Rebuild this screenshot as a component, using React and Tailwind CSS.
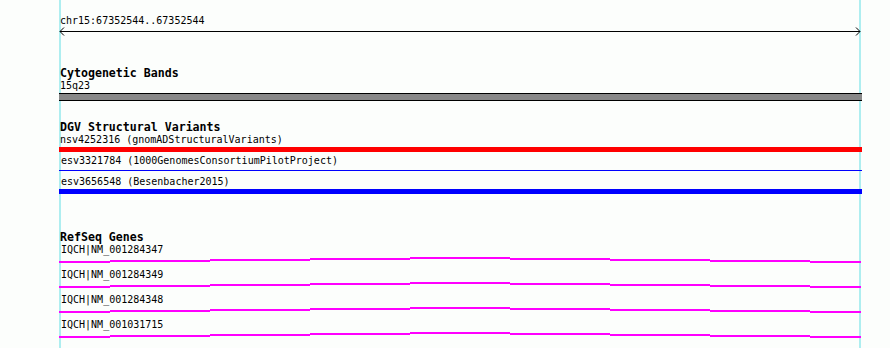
import React from 'react';

const genes = ['IQCH|NM_001284347', 'IQCH|NM_001284349', 'IQCH|NM_001284348', 'IQCH|NM_001031715'];

// step offsets of the gene line, one per 100px segment
const steps = [
    {x: 0, w: 51, y: 4},
    {x: 51, w: 100, y: 3},
    {x: 151, w: 100, y: 2},
    {x: 251, w: 100, y: 1},
    {x: 351, w: 100, y: 0},
    {x: 451, w: 100, y: 1},
    {x: 551, w: 100, y: 2},
    {x: 651, w: 100, y: 3},
    {x: 751, w: 51, y: 4},
];

function GeneLine() {
    return (
        <svg width="803" height="13" className="block">
            {steps.map((s, i) => (
                <rect key={i} x={s.x} y={s.y + 1} width={s.w} height="2" fill="#ff00ff"/>
            ))}
        </svg>
    );
}

function App() {
    return (
        <div className="w-[890px] h-[348px] bg-[#fcfefc] overflow-hidden font-['DejaVu_Sans_Mono',monospace] text-black">
            <div className="ml-[59px] w-[802px] h-[348px] border-x-2 border-[#aeeef0]">
                <div className="-ml-[2px] w-[803px]">
                    <div className="pt-[15px] text-[10px] leading-[12px] pl-[1px]">chr15:67352544..67352544</div>
                    <svg width="803" height="9" className="block">
                        <line x1="1" y1="4.5" x2="801" y2="4.5" stroke="#000" strokeWidth="1"/>
                        <polyline points="5,0.5 1,4.5 5,8.5" fill="none" stroke="#000" strokeWidth="1"/>
                        <polyline points="797,0.5 801,4.5 797,8.5" fill="none" stroke="#000" strokeWidth="1"/>
                    </svg>

                    <div className="mt-[31px] text-[11.6px] leading-[13px] font-bold pl-[1px]">Cytogenetic Bands</div>
                    <div className="text-[10px] leading-[12px] pl-[1px]">15q23</div>
                    <div className="mt-[1px] h-[8px] border-y border-black bg-[#888888]"></div>

                    <div className="mt-[20px] text-[11.6px] leading-[13px] font-bold pl-[1px]">DGV Structural Variants</div>
                    <div className="text-[10px] leading-[12px] pl-[1px]">nsv4252316 (gnomADStructuralVariants)</div>
                    <div className="mt-[1px] h-[5px] bg-[#ff0000]"></div>
                    <div className="mt-[3px] text-[10px] leading-[12px] pl-[2px]">esv3321784 (1000GenomesConsortiumPilotProject)</div>
                    <div className="mt-[3px] h-[1px] bg-[#0000ff]"></div>
                    <div className="mt-[5px] text-[10px] leading-[12px] pl-[2px]">esv3656548 (Besenbacher2015)</div>
                    <div className="mt-[1px] h-[5px] bg-[#0000ff]"></div>

                    <div className="mt-[37px] text-[11.6px] leading-[13px] font-bold pl-[1px]">RefSeq Genes</div>
                    {genes.map(g => (
                        <div key={g}>
                            <div className="text-[10px] leading-[12px] pl-[2px]">{g}</div>
                            <GeneLine/>
                        </div>
                    ))}
                </div>
            </div>
        </div>
    );
}

export default App;
